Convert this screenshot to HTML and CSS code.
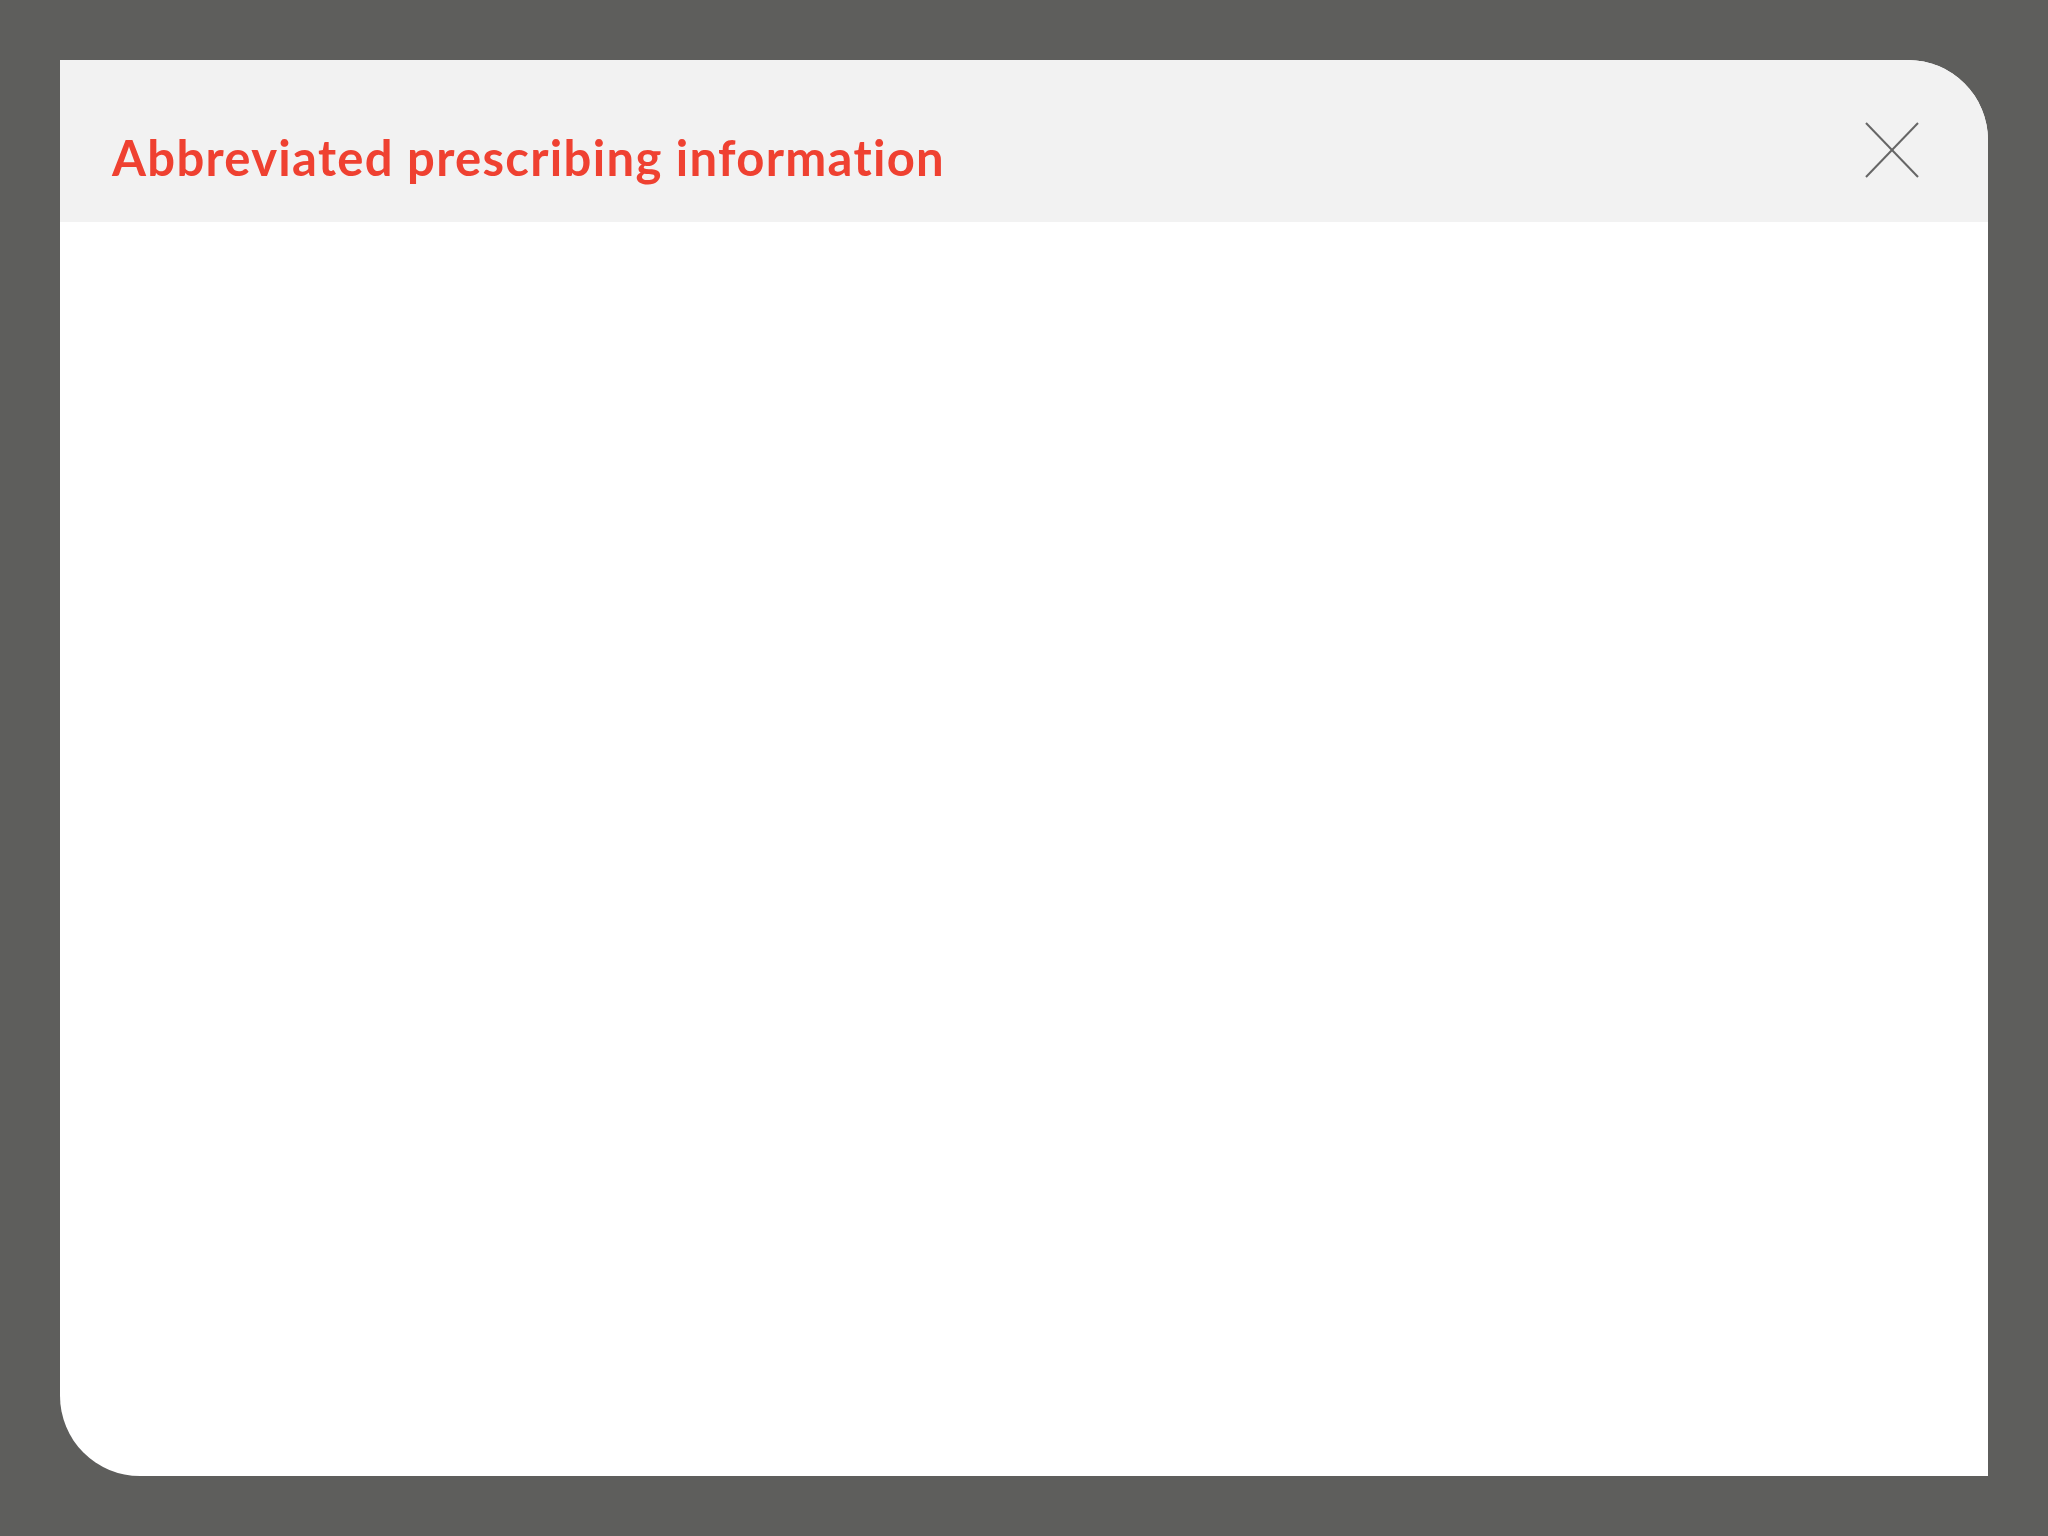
FILE: index.html
```html
<!DOCTYPE html>
<html lang="en">
<head>
<meta charset="utf-8">
<title>Abbreviated prescribing information</title>
<link rel="stylesheet" href="styles.css">
</head>
<body>
<div class="backdrop">
  <div class="modal">
    <div class="modal-header">
      <h1 class="modal-title">Abbreviated prescribing information</h1>
      <button class="close-btn" aria-label="Close">
        <svg width="54" height="56" viewBox="0 0 54 56">
          <line x1="1" y1="1" x2="53" y2="55" stroke="#666" stroke-width="2"/>
          <line x1="53" y1="1" x2="1" y2="55" stroke="#666" stroke-width="2"/>
        </svg>
      </button>
    </div>
    <div class="modal-body"></div>
  </div>
</div>
</body>
</html>
```

FILE: styles.css
```css
html, body {
  margin: 0;
  padding: 0;
  background: #5e5e5c;
}
.backdrop {
  width: 2048px;
  height: 1536px;
  box-sizing: border-box;
  padding: 60px;
}
.modal {
  width: 1928px;
  height: 1416px;
  background: #ffffff;
  border-radius: 0 80px 0 80px;
  overflow: hidden;
  display: flex;
  flex-direction: column;
}
.modal-header {
  height: 162px;
  background: #f2f2f2;
  display: flex;
  align-items: flex-start;
  justify-content: space-between;
  padding: 0 69px 0 52px;
  flex-shrink: 0;
}
.modal-title {
  margin: 67px 0 0 0;
  font-family: "Lato", sans-serif;
  font-weight: 700;
  font-size: 49px;
  line-height: 60px;
  color: #ef4131;
  letter-spacing: 1.3px;
  font-variant-ligatures: none;
  font-feature-settings: "liga" 0, "dlig" 0;
}
.close-btn {
  margin-top: 62px;
  padding: 0;
  border: 0;
  background: transparent;
  width: 54px;
  height: 56px;
  display: block;
}
.close-btn svg {
  display: block;
}
.modal-body {
  flex: 1;
}
```
